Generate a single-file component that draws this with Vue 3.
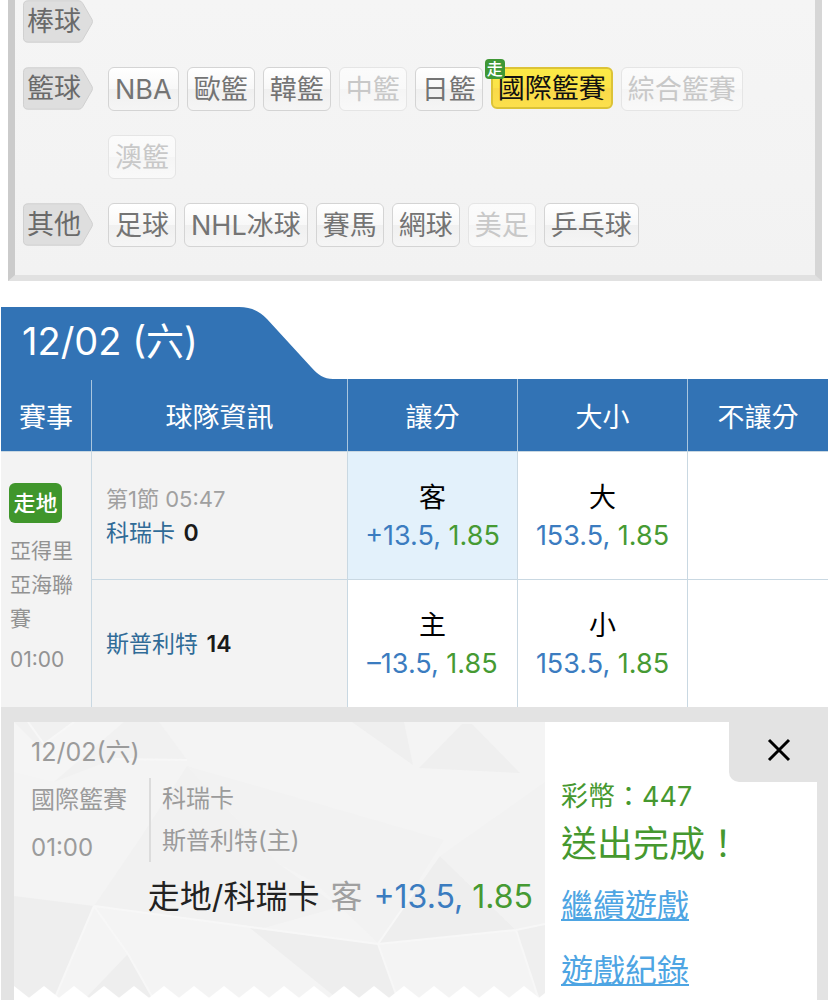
<script setup>
const sports = [
  { name: '棒球', leagues: [] },
  {
    name: '籃球',
    leagues: [
      { name: 'NBA' },
      { name: '歐籃' },
      { name: '韓籃' },
      { name: '中籃', disabled: true },
      { name: '日籃' },
      { name: '國際籃賽', active: true, live: true },
      { name: '綜合籃賽', disabled: true },
      { name: '澳籃', disabled: true },
    ],
  },
  {
    name: '其他',
    leagues: [
      { name: '足球' },
      { name: 'NHL冰球' },
      { name: '賽馬' },
      { name: '網球' },
      { name: '美足', disabled: true },
      { name: '乒乓球' },
    ],
  },
]
</script>

<template>
  <main class="page">
    <nav class="filter" aria-label="賽事">
      <div v-for="sport in sports" :key="sport.name" class="sport">
        <div class="sport-label">
          <svg class="sport-shape" viewBox="0 0 72 43" aria-hidden="true">
            <path d="M5 .5H57Q59 .5 60.500 3L70 19.500Q71 21.500 70 23.500L60.500 40Q59 42.500 57 42.500H5Q.5 42.500 .5 38V5Q.5 .5 5 .5Z" fill="#dedede" stroke="#cfcfcf" />
          </svg>
          <span class="sport-name">{{ sport.name }}</span>
        </div>
        <div class="leagues">
          <button
            v-for="league in sport.leagues"
            :key="league.name"
            type="button"
            class="chip"
            :class="{ active: league.active }"
            :disabled="league.disabled"
          >
            {{ league.name }}
            <span v-if="league.live" class="live-dot">走</span>
          </button>
        </div>
      </div>
    </nav>

    <section class="board">
      <h2 class="date-tab">
        <svg class="tab-shape" viewBox="0 0 332 73" aria-hidden="true">
          <path d="M0 0H238C250 0 258 4 266 12L310 60C317 68 323 72 332 72V73H0Z" fill="#3273b5" />
        </svg>
        <span class="tab-text">12/02 (六)</span>
      </h2>

      <table class="odds">
        <colgroup>
          <col class="c-event" />
          <col class="c-team" />
          <col class="c-odd" />
          <col class="c-odd" />
          <col />
        </colgroup>
        <thead>
          <tr>
            <th scope="col">賽事</th>
            <th scope="col">球隊資訊</th>
            <th scope="col">讓分</th>
            <th scope="col">大小</th>
            <th scope="col">不讓分</th>
          </tr>
        </thead>
        <tbody>
          <tr>
            <td rowspan="2" class="event">
              <span class="live">走地</span>
              <div class="league">亞得里亞海聯賽</div>
              <div class="time">01:00</div>
            </td>
            <td class="team">
              <div class="period">第1節 05:47</div>
              <div><span class="team-name">科瑞卡</span> <b>0</b></div>
            </td>
            <td class="odd picked">
              <div class="side">客</div>
              <div><span class="line">+13.5,</span> <span class="rate">1.85</span></div>
            </td>
            <td class="odd">
              <div class="side">大</div>
              <div><span class="line">153.5,</span> <span class="rate">1.85</span></div>
            </td>
            <td class="odd"></td>
          </tr>
          <tr>
            <td class="team">
              <div><span class="team-name">斯普利特</span> <b>14</b></div>
            </td>
            <td class="odd">
              <div class="side">主</div>
              <div><span class="line">–13.5,</span> <span class="rate">1.85</span></div>
            </td>
            <td class="odd">
              <div class="side">小</div>
              <div><span class="line">153.5,</span> <span class="rate">1.85</span></div>
            </td>
            <td class="odd"></td>
          </tr>
        </tbody>
      </table>
    </section>

    <section class="receipt">
      <div class="ticket">
        <svg class="ticket-bg" viewBox="0 0 531 278" preserveAspectRatio="none" aria-hidden="true">
          <defs>
            <pattern id="teeth" width="30" height="15" patternUnits="userSpaceOnUse" y="264">
              <path d="M0 0L14 11Q15 12 16 11L30 0V15H0Z" fill="#fff" />
            </pattern>
          </defs>
          <rect width="531" height="278" fill="#f4f4f4" />
          <path d="M0 0H145L173 38L100 37L40 60L0 30Z" fill="#f1f1f1" />
          <path d="M0 50L40 60L110 0H60L25 25L0 0Z" fill="#f5f5f5" />
          <path d="M173 44L265 142L325 185L250 206L80 184L125 118Z" fill="#f1f1f1" />
          <path d="M173 44L430 118L365 222L300 160L265 142Z" fill="#f2f2f2" />
          <path d="M338 0H390L399 43Z" fill="#efefef" />
          <path d="M405 46L448 2H458L506 51Z" fill="#efefef" />
          <path d="M0 174L80 184L40 278H0Z" fill="#eeeeee" />
          <path d="M70 278L114 232L140 278Z" fill="#eeeeee" />
          <path d="M236 206L364 222L384 278H325Z" fill="#eeeeee" />
          <path d="M364 222L426 134L502 208Z" fill="#eeeeee" />
          <path d="M502 208L531 202V278H525Z" fill="#efefef" />
          <path d="M426 134L531 60V202L502 208Z" fill="#f2f2f2" />
          <path d="M80 184L364 222L502 208L531 202M80 184L114 232L140 278M80 184L40 278M100 37L173 38M364 222L384 278M502 208L525 278M364 222L400 170M14 0L30 22L60 0" fill="none" stroke="#f7f7f7" stroke-width="2" />
          <rect y="264" width="531" height="14" fill="url(#teeth)" />
        </svg>
        <div class="ticket-body">
          <div class="meta">12/02(六)</div>
          <div class="match">
            <div class="when">
              <div>國際籃賽</div>
              <div>01:00</div>
            </div>
            <div class="versus">
              <div>科瑞卡</div>
              <div>斯普利特(主)</div>
            </div>
          </div>
          <div class="selection">
            走地/科瑞卡 <span class="muted">客</span> <span class="line">+13.5,</span> <span class="rate">1.85</span>
          </div>
        </div>
      </div>
      <div class="result">
        <div class="coins">彩幣：447</div>
        <div class="done">送出完成！</div>
        <a href="#continue">繼續遊戲</a>
        <a href="#history">遊戲紀錄</a>
      </div>
      <button type="button" class="close" aria-label="Close">
        <svg viewBox="0 0 24 24" width="24" height="24" aria-hidden="true">
          <path d="M2 2L22 22M22 2L2 22" stroke="#000" stroke-width="3" fill="none" />
        </svg>
      </button>
    </section>
  </main>
</template>

<style>
body {
  margin: 0;
  background: #fff;
}
</style>

<style scoped>
.page {
  font-family: Inter, "Noto Sans CJK TC", sans-serif;
  color: #000;
}

.filter {
  margin: 0 8px;
  padding: 0 8px 28px;
  border: solid;
  border-width: 0 7px 6px;
  border-color: #dedede #d6d6d6 #e1e1e1 #cbcbcb;
  background: linear-gradient(#f5f5f5, #f2f2f2);
}

.sport {
  display: flex;
  align-items: flex-start;
  gap: 14px;
}

.sport + .sport {
  margin-top: 24px;
}

.sport-label {
  position: relative;
  flex: none;
  width: 71px;
  height: 43px;
}

.sport-shape {
  position: absolute;
  inset: 0;
  width: 100%;
  height: 100%;
}

.sport-name {
  position: relative;
  display: block;
  padding-left: 4px;
  font-size: 27px;
  line-height: 44px;
  color: #6a6a6a;
}

.leagues {
  display: flex;
  flex-wrap: wrap;
  gap: 24px 8px;
}

.chip {
  position: relative;
  box-sizing: border-box;
  height: 44px;
  padding: 1px 6px 0;
  border: 1px solid #d4d4d4;
  border-radius: 6px;
  background: linear-gradient(#fff, #f8f8f8 50%, #f0f0f0 51%, #f5f5f5);
  font: inherit;
  font-size: 27px;
  line-height: 42px;
  color: #747474;
}

.chip:disabled {
  border-color: #e5e5e5;
  background: linear-gradient(#fbfbfb, #f9f9f9 50%, #f5f5f5 51%, #f9f9f9);
  color: #c8c8c8;
}

.chip.active {
  height: 42px;
  border: 2px solid #dcc337;
  padding: 1px 5px 0;
  background: linear-gradient(#fcea45, #fbe349 50%, #f9d949 51%, #fce04c);
  line-height: 38px;
  color: #111;
}

.live-dot {
  position: absolute;
  top: -10px;
  left: -8px;
  width: 20px;
  height: 20px;
  border-radius: 4px;
  background: #3f9735;
  font-size: 16px;
  line-height: 20px;
  font-weight: 500;
  text-align: center;
  color: #fff;
}

.board {
  margin: 26px 2px 0 1px;
}

.date-tab {
  position: relative;
  margin: 0;
  height: 72px;
  padding-left: 21px;
  font-size: 38px;
  font-weight: 400;
  line-height: 68px;
  color: #fff;
}

.tab-shape {
  position: absolute;
  top: 0;
  left: 0;
  width: 332px;
  height: 73px;
}

.tab-text {
  position: relative;
}

.odds {
  width: 100%;
  table-layout: fixed;
  border-collapse: separate;
  border-spacing: 0;
}

.c-event {
  width: 91px;
}

.c-team {
  width: 256px;
}

.c-odd {
  width: 170px;
}

th {
  box-sizing: border-box;
  height: 72px;
  padding: 6px 0 0;
  border-right: 1px solid #a9c6df;
  background: #3273b5;
  font-size: 27px;
  font-weight: 400;
  line-height: 40px;
  color: #fff;
}

th:last-child,
td.odd:last-child {
  border-right: 0;
}

td {
  box-sizing: border-box;
  height: 128px;
  padding: 2px 0 0;
  border-top: 1px solid #c9d8e2;
  border-right: 1px solid #c9d8e2;
}

.event,
.team {
  background: #f3f3f3;
}

.event {
  padding: 0 8px;
  font-size: 21px;
  line-height: 34px;
  color: #929292;
}

.live {
  display: block;
  width: 53px;
  margin-bottom: 11px;
  border-radius: 6px;
  background: #40962c;
  font-size: 22px;
  font-weight: 500;
  line-height: 40px;
  text-align: center;
  color: #fff;
}

.league,
.time {
  padding-left: 1px;
}

.time {
  margin-top: 7px;
}

.team {
  padding: 0 0 0 14px;
  font-size: 23px;
  line-height: 34px;
}

.period {
  font-size: 22px;
  color: #a0a0a0;
}

.team-name {
  color: #306b97;
}

.team b {
  margin-left: 2px;
  font-weight: 600;
  color: #1a1a1a;
}

.odd {
  font-size: 27px;
  line-height: 38px;
  text-align: center;
}

.picked {
  background: #e3f1fb;
}

.line {
  color: #3b7cc0;
}

.rate {
  color: #469a33;
}

.receipt {
  position: relative;
  display: flex;
  margin: 0 2px 0 1px;
  border: solid #e3e3e3;
  border-width: 15px 11px 0 13px;
  background: #fff;
}

.ticket {
  position: relative;
  flex: 1;
}

.ticket-bg {
  position: absolute;
  top: 0;
  left: 0;
  width: 100%;
  height: 278px;
}

.ticket-body {
  position: relative;
  padding: 6px 12px 78px 17px;
  font-size: 24px;
  line-height: 48px;
  color: #9b9b9b;
}

.meta {
  font-size: 25px;
}

.match {
  display: flex;
  gap: 22px;
}

.versus {
  margin: 2px 0 10px;
  padding-left: 11px;
  border-left: 2px solid #dcdcdc;
  line-height: 42px;
}

.selection {
  font-size: 32px;
  line-height: 50px;
  text-align: right;
  white-space: nowrap;
  color: #222;
}

.muted {
  margin: 0 2px;
  color: #a0a0a0;
}

.result {
  box-sizing: border-box;
  width: 272px;
  padding: 56px 0 0 16px;
  color: #46982f;
}

.coins {
  font-size: 27px;
  line-height: 38px;
}

.done {
  font-size: 36px;
  line-height: 57px;
}

.result a {
  display: block;
  width: fit-content;
  font-size: 32px;
  line-height: 65px;
  color: #4ea5e3;
  text-decoration-thickness: 2px;
  text-underline-offset: 2px;
}

.close {
  position: absolute;
  top: 0;
  right: -11px;
  display: flex;
  align-items: center;
  justify-content: center;
  width: 99px;
  height: 60px;
  padding: 0 0 4px;
  border: 0;
  border-radius: 0 0 0 10px;
  background: #e3e3e3;
}
</style>
